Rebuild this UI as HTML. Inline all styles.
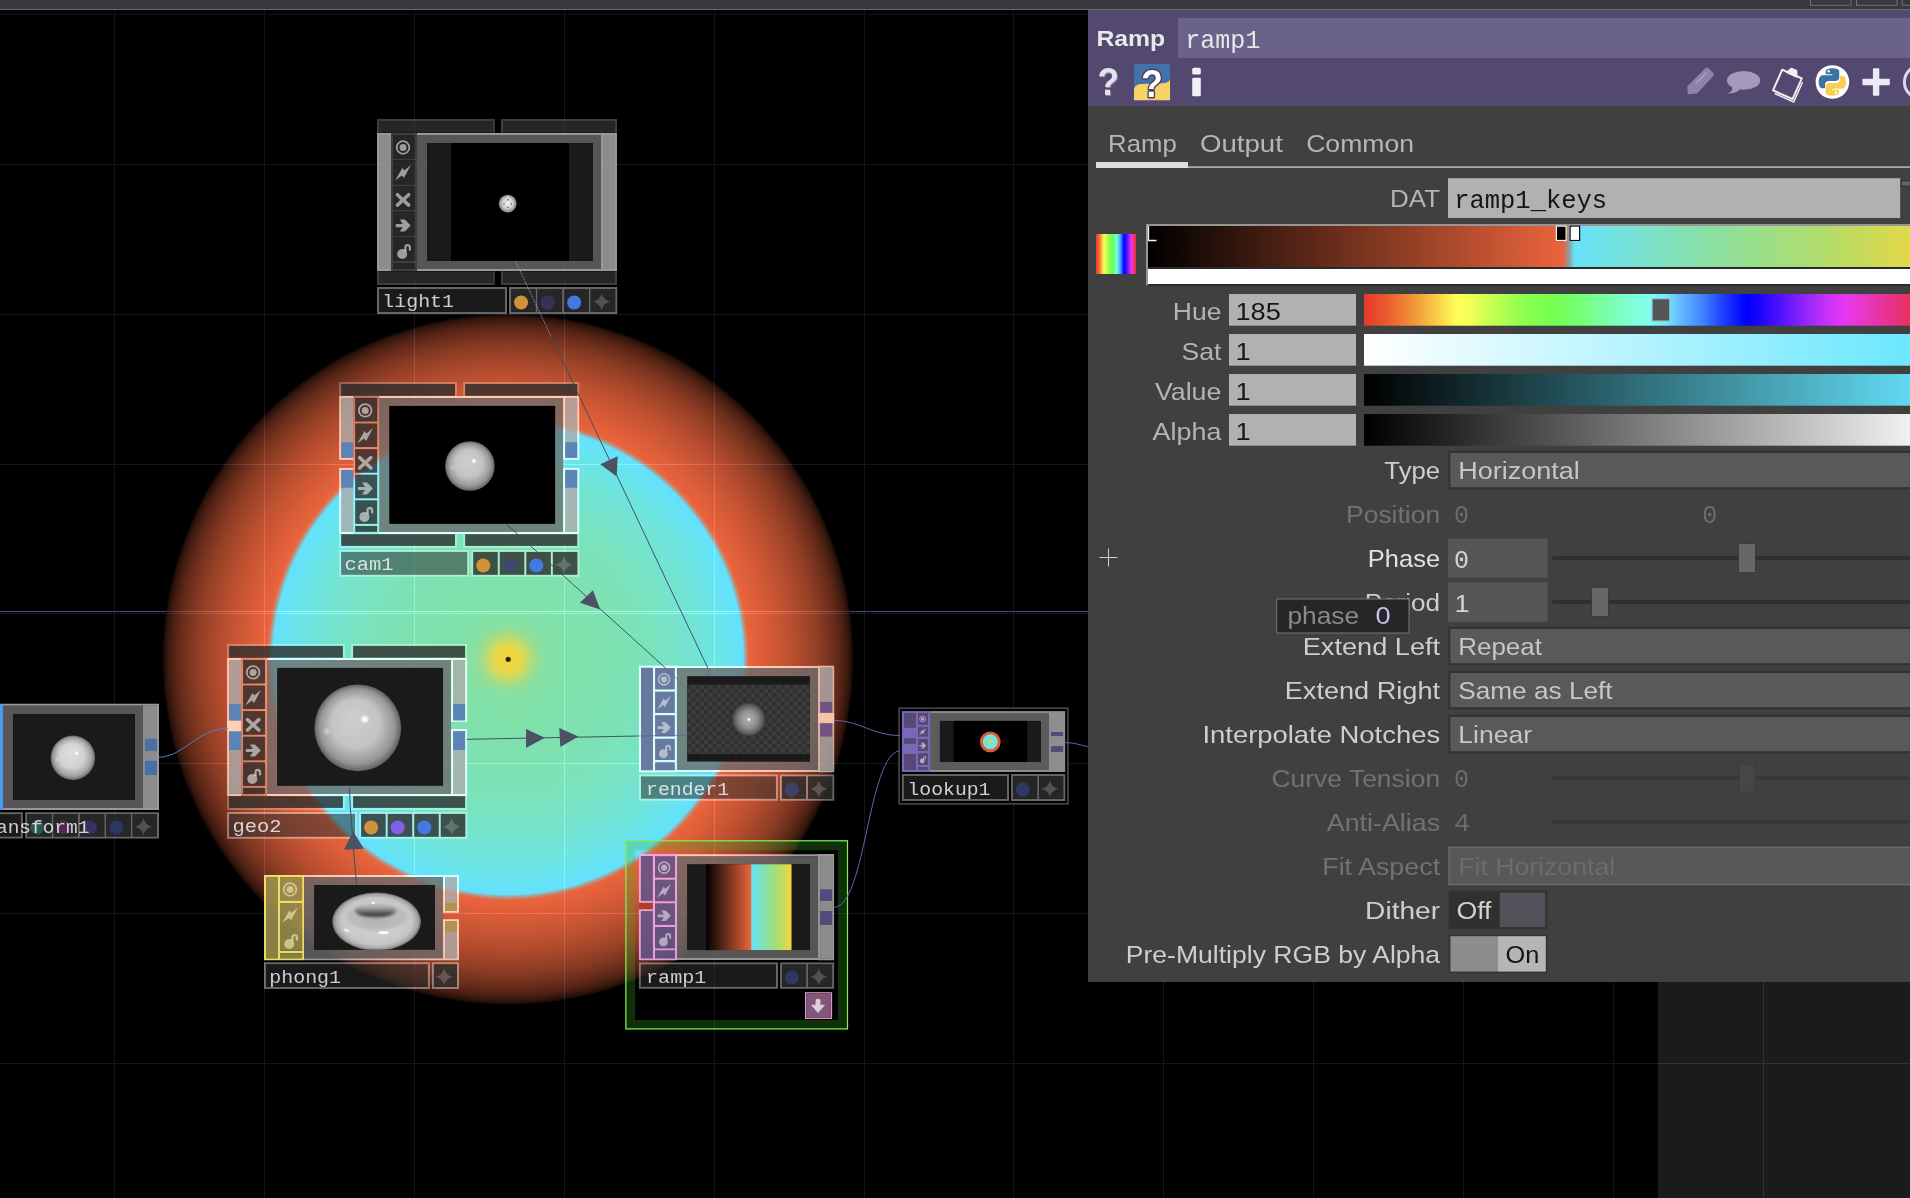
<!DOCTYPE html>
<html><head><meta charset="utf-8"><title>TouchDesigner</title>
<style>
html,body{margin:0;padding:0;background:#000;overflow:hidden}
body{width:1910px;height:1198px;font-family:"Liberation Sans",sans-serif}
svg{display:block;position:absolute;left:0;top:0}
text{white-space:pre}
.add{mix-blend-mode:plus-lighter}
</style></head><body>
<svg width="1910" height="1198" viewBox="0 0 1910 1198">
<defs>
<radialGradient id="bigs" gradientUnits="userSpaceOnUse" cx="508" cy="659.3" r="345.5"><stop offset="0.0000" stop-color="rgb(240,214,62)" stop-opacity="1"/><stop offset="0.0260" stop-color="rgb(240,214,62)" stop-opacity="1"/><stop offset="0.0434" stop-color="rgb(222,216,84)" stop-opacity="1"/><stop offset="0.0637" stop-color="rgb(184,220,118)" stop-opacity="1"/><stop offset="0.0839" stop-color="rgb(150,222,148)" stop-opacity="1"/><stop offset="0.1100" stop-color="rgb(132,224,164)" stop-opacity="1"/><stop offset="0.1621" stop-color="rgb(128,224,168)" stop-opacity="1"/><stop offset="0.2894" stop-color="rgb(126,225,176)" stop-opacity="1"/><stop offset="0.4052" stop-color="rgb(123,226,186)" stop-opacity="1"/><stop offset="0.4776" stop-color="rgb(119,227,199)" stop-opacity="1"/><stop offset="0.5355" stop-color="rgb(115,228,211)" stop-opacity="1"/><stop offset="0.5933" stop-color="rgb(110,229,225)" stop-opacity="1"/><stop offset="0.6397" stop-color="rgb(104,228,241)" stop-opacity="1"/><stop offset="0.6715" stop-color="rgb(100,226,252)" stop-opacity="1"/><stop offset="0.6802" stop-color="rgb(100,226,252)" stop-opacity="1"/><stop offset="0.6874" stop-color="rgb(170,160,150)" stop-opacity="1"/><stop offset="0.6975" stop-color="rgb(234,100,60)" stop-opacity="1"/><stop offset="0.7149" stop-color="rgb(228,97,58)" stop-opacity="1"/><stop offset="0.7323" stop-color="rgb(222,95,57)" stop-opacity="1"/><stop offset="0.7496" stop-color="rgb(216,92,55)" stop-opacity="1"/><stop offset="0.7670" stop-color="rgb(209,89,53)" stop-opacity="1"/><stop offset="0.7844" stop-color="rgb(202,86,52)" stop-opacity="1"/><stop offset="0.8017" stop-color="rgb(195,83,50)" stop-opacity="1"/><stop offset="0.8191" stop-color="rgb(187,80,48)" stop-opacity="1"/><stop offset="0.8365" stop-color="rgb(179,76,45)" stop-opacity="1"/><stop offset="0.8538" stop-color="rgb(170,72,43)" stop-opacity="1"/><stop offset="0.8712" stop-color="rgb(160,68,41)" stop-opacity="1"/><stop offset="0.8886" stop-color="rgb(150,64,38)" stop-opacity="1"/><stop offset="0.9059" stop-color="rgb(138,59,35)" stop-opacity="1"/><stop offset="0.9233" stop-color="rgb(125,53,32)" stop-opacity="1"/><stop offset="0.9407" stop-color="rgb(110,47,28)" stop-opacity="1"/><stop offset="0.9479" stop-color="rgb(104,44,26)" stop-opacity="1"/><stop offset="0.9551" stop-color="rgb(96,41,24)" stop-opacity="1"/><stop offset="0.9624" stop-color="rgb(88,37,22)" stop-opacity="1"/><stop offset="0.9696" stop-color="rgb(80,34,20)" stop-opacity="1"/><stop offset="0.9768" stop-color="rgb(69,29,17)" stop-opacity="1"/><stop offset="0.9841" stop-color="rgb(58,24,14)" stop-opacity="1"/><stop offset="0.9913" stop-color="rgb(42,18,11)" stop-opacity="1"/><stop offset="0.9986" stop-color="rgb(17,7,4)" stop-opacity="1"/><stop offset="0.9977" stop-color="rgb(10,4,2)" stop-opacity="1"/><stop offset="1.0000" stop-color="rgb(0,0,0)" stop-opacity="0"/></radialGradient>
<radialGradient id="lsp" cx="0.5" cy="0.5" r="0.5" fx="0.5" fy="0.45"><stop offset="0" stop-color="#e8e8e8"/><stop offset="0.6" stop-color="#cfcfcf"/><stop offset="1" stop-color="#7a7a7a"/></radialGradient>
<radialGradient id="sp1" cx="0.5" cy="0.5" r="0.5" fx="0.44" fy="0.38"><stop offset="0" stop-color="rgb(206,206,206)"/><stop offset="0.55" stop-color="rgb(196,196,196)"/><stop offset="0.86" stop-color="rgb(150,150,150)"/><stop offset="1" stop-color="rgb(96,96,96)"/></radialGradient>
<radialGradient id="sh1"><stop offset="0" stop-color="#fff" stop-opacity="1"/><stop offset="0.45" stop-color="#fff" stop-opacity="0.75"/><stop offset="1" stop-color="#fff" stop-opacity="0"/></radialGradient>
<radialGradient id="sp2" cx="0.5" cy="0.5" r="0.5" fx="0.44" fy="0.38"><stop offset="0" stop-color="rgb(206,206,206)"/><stop offset="0.55" stop-color="rgb(196,196,196)"/><stop offset="0.86" stop-color="rgb(150,150,150)"/><stop offset="1" stop-color="rgb(96,96,96)"/></radialGradient>
<radialGradient id="sh2"><stop offset="0" stop-color="#fff" stop-opacity="1"/><stop offset="0.45" stop-color="#fff" stop-opacity="0.75"/><stop offset="1" stop-color="#fff" stop-opacity="0"/></radialGradient>
<radialGradient id="sp3" cx="0.5" cy="0.5" r="0.5" fx="0.44" fy="0.38"><stop offset="0" stop-color="rgb(222,222,222)"/><stop offset="0.55" stop-color="rgb(211,211,211)"/><stop offset="0.86" stop-color="rgb(162,162,162)"/><stop offset="1" stop-color="rgb(103,103,103)"/></radialGradient>
<radialGradient id="sh3"><stop offset="0" stop-color="#fff" stop-opacity="1"/><stop offset="0.45" stop-color="#fff" stop-opacity="0.75"/><stop offset="1" stop-color="#fff" stop-opacity="0"/></radialGradient>
<clipPath id="torc"><rect x="314.1" y="885" width="120.9" height="64.8"/></clipPath>
<radialGradient id="tor" cx="0.5" cy="0.5" r="0.5" fx="0.5" fy="0.46"><stop offset="0" stop-color="#c4c4c4"/><stop offset="0.5" stop-color="#cecece"/><stop offset="0.8" stop-color="#c6c6c6"/><stop offset="0.93" stop-color="#a6a6a6"/><stop offset="1" stop-color="#6c6c6c"/></radialGradient>
<linearGradient id="torh" x1="0" x2="0" y1="0" y2="1"><stop offset="0" stop-color="#bcbcbc" stop-opacity="0.2"/><stop offset="0.4" stop-color="#8c8c8c" stop-opacity="0.9"/><stop offset="0.8" stop-color="#383838"/><stop offset="1" stop-color="#5a5a5a"/></linearGradient>
<filter id="tblur" x="-20%" y="-40%" width="140%" height="180%"><feGaussianBlur stdDeviation="1.5"/></filter>
<filter id="tblur2" x="-20%" y="-20%" width="140%" height="140%"><feGaussianBlur stdDeviation="0.7"/></filter>
<pattern id="chk" x="687.1" y="684.6" width="8.5" height="8.5" patternUnits="userSpaceOnUse"><rect width="8.5" height="8.5" fill="#3d3d3d"/><rect width="4.25" height="4.25" fill="#2f2f2f"/><rect x="4.25" y="4.25" width="4.25" height="4.25" fill="#2f2f2f"/></pattern>
<radialGradient id="rsp" cx="0.5" cy="0.5" r="0.5" fx="0.5" fy="0.5"><stop offset="0" stop-color="#b4b4b4"/><stop offset="0.5" stop-color="#8e8e8e"/><stop offset="0.85" stop-color="#585858"/><stop offset="1" stop-color="#2e2e2e"/></radialGradient>
<linearGradient id="ramp2" gradientUnits="userSpaceOnUse" x1="706.1" x2="791.5" y1="0" y2="0"><stop offset="0" stop-color="#000"/><stop offset="0.522" stop-color="rgb(234,100,60)"/><stop offset="0.535" stop-color="rgb(104,226,250)"/><stop offset="0.72" stop-color="rgb(140,224,158)"/><stop offset="0.86" stop-color="rgb(180,220,104)"/><stop offset="1" stop-color="rgb(244,214,60)"/></linearGradient>
<radialGradient id="lk"><stop offset="0" stop-color="#e8d840"/><stop offset="0.12" stop-color="#a0e090"/><stop offset="0.5" stop-color="#78e4c8"/><stop offset="1" stop-color="#68e4f6"/></radialGradient>
<clipPath id="phc"><rect x="1133.8" y="64" width="36.4" height="36.3"/></clipPath>
<linearGradient id="rbw" x1="0" x2="1" y1="0" y2="0"><stop offset="0" stop-color="#e8382c"/><stop offset="0.09" stop-color="#f07a32"/><stop offset="0.2" stop-color="#ffff55"/><stop offset="0.31" stop-color="#9cff50"/><stop offset="0.42" stop-color="#66ff58"/><stop offset="0.52" stop-color="#70ffd8"/><stop offset="0.6" stop-color="#50b0ff"/><stop offset="0.7" stop-color="#0000ff"/><stop offset="0.78" stop-color="#5a10ff"/><stop offset="0.88" stop-color="#e838f0"/><stop offset="1" stop-color="#f03030"/></linearGradient>
<linearGradient id="ramp" gradientUnits="userSpaceOnUse" x1="1148" x2="1940" y1="0" y2="0"><stop offset="0" stop-color="#000"/><stop offset="0.5237" stop-color="rgb(234,100,60)"/><stop offset="0.5313" stop-color="rgb(150,150,150)"/><stop offset="0.5383" stop-color="rgb(104,226,250)"/><stop offset="0.72" stop-color="rgb(140,224,158)"/><stop offset="0.86" stop-color="rgb(180,220,104)"/><stop offset="1" stop-color="rgb(244,214,60)"/></linearGradient>
<linearGradient id="hue" gradientUnits="userSpaceOnUse" x1="1364" x2="1942" y1="0" y2="0"><stop offset="0.0000" stop-color="#e8382c"/><stop offset="0.0389" stop-color="#ea5a2e"/><stop offset="0.0833" stop-color="#f09236"/><stop offset="0.1250" stop-color="#f8cc48"/><stop offset="0.1611" stop-color="#ffff58"/><stop offset="0.1833" stop-color="#f2ff56"/><stop offset="0.2222" stop-color="#c4ff52"/><stop offset="0.2778" stop-color="#8cff4e"/><stop offset="0.3278" stop-color="#74ff50"/><stop offset="0.3750" stop-color="#76ff76"/><stop offset="0.4167" stop-color="#7affa6"/><stop offset="0.4583" stop-color="#7effd0"/><stop offset="0.4944" stop-color="#80fff0"/><stop offset="0.5222" stop-color="#76e6ff"/><stop offset="0.5500" stop-color="#60b8ff"/><stop offset="0.5833" stop-color="#4488ff"/><stop offset="0.6222" stop-color="#1c3cff"/><stop offset="0.6611" stop-color="#0000ff"/><stop offset="0.6833" stop-color="#1804fe"/><stop offset="0.7222" stop-color="#5412fc"/><stop offset="0.7639" stop-color="#9226fa"/><stop offset="0.8056" stop-color="#cc34f6"/><stop offset="0.8333" stop-color="#e838f0"/><stop offset="0.8667" stop-color="#e836c4"/><stop offset="0.9056" stop-color="#e83290"/><stop offset="0.9444" stop-color="#e83060"/><stop offset="1.0000" stop-color="#e83030"/></linearGradient>
<linearGradient id="sat" gradientUnits="userSpaceOnUse" x1="1364" x2="1942" y1="0" y2="0"><stop offset="0" stop-color="#fff"/><stop offset="1" stop-color="#62e6ff"/></linearGradient>
<linearGradient id="val" gradientUnits="userSpaceOnUse" x1="1364" x2="1942" y1="0" y2="0"><stop offset="0" stop-color="#000"/><stop offset="1" stop-color="#66e6ff"/></linearGradient>
<linearGradient id="alp" gradientUnits="userSpaceOnUse" x1="1364" x2="1942" y1="0" y2="0"><stop offset="0" stop-color="#000"/><stop offset="1" stop-color="#fff"/></linearGradient>
</defs>
<rect x="0" y="0" width="1910" height="1198" fill="#000" />
<rect x="1658" y="982" width="252" height="216" fill="#1b1b1b" />
<circle cx="508" cy="659.3" r="345.5" fill="url(#bigs)"/>
<circle cx="508.2" cy="659.3" r="2.6" fill="#3a3010"/>
<circle cx="508.2" cy="659.3" r="1.4" fill="#1c1608"/>
<g class="add">
<rect x="114" y="10" width="1" height="1188" fill="rgb(21,21,33)" />
<rect x="264" y="10" width="1" height="1188" fill="rgb(21,21,33)" />
<rect x="414" y="10" width="1" height="1188" fill="rgb(21,21,33)" />
<rect x="564" y="10" width="1" height="1188" fill="rgb(21,21,33)" />
<rect x="714" y="10" width="1" height="1188" fill="rgb(21,21,33)" />
<rect x="864" y="10" width="1" height="1188" fill="rgb(21,21,33)" />
<rect x="1013" y="10" width="1" height="1188" fill="rgb(21,21,33)" />
<rect x="1163" y="982" width="1" height="216" fill="rgb(21,21,33)" />
<rect x="1313" y="982" width="1" height="216" fill="rgb(21,21,33)" />
<rect x="1463" y="982" width="1" height="216" fill="rgb(21,21,33)" />
<rect x="1613" y="982" width="1" height="216" fill="rgb(21,21,33)" />
<rect x="1763" y="982" width="1" height="216" fill="rgb(21,21,33)" />
<rect x="0" y="1063" width="1910" height="1" fill="rgb(21,21,33)" />
<rect x="0" y="913" width="1088" height="1" fill="rgb(21,21,33)" />
<rect x="0" y="763" width="1088" height="1" fill="rgb(21,21,33)" />
<rect x="0" y="613" width="1088" height="1" fill="rgb(21,21,33)" />
<rect x="0" y="464" width="1088" height="1" fill="rgb(21,21,33)" />
<rect x="0" y="314" width="1088" height="1" fill="rgb(21,21,33)" />
<rect x="0" y="164" width="1088" height="1" fill="rgb(21,21,33)" />
<rect x="0" y="14" width="1088" height="1" fill="rgb(21,21,33)" />
<rect x="0" y="611" width="166" height="1" fill="rgb(74,72,122)" />
<rect x="166" y="611" width="684" height="1" fill="rgb(34,30,46)" />
<rect x="850" y="611" width="238" height="1" fill="rgb(74,72,122)" />
</g>
<rect x="0" y="0" width="1910" height="9" fill="#38393c" />
<rect x="0" y="9" width="1910" height="1" fill="#6a6a6c" />
<rect x="1810.5" y="-1.5" width="40.5" height="6.8" fill="none" stroke="#707072" stroke-width="1" />
<rect x="1856.5" y="-1.5" width="40.6" height="6.8" fill="none" stroke="#707072" stroke-width="1" />
<rect x="1902.2" y="-1.5" width="17.3" height="6.8" fill="none" stroke="#707072" stroke-width="1" />
<path d="M377 119 H494.8 V132.8 H377 Z M379 121 V132.8 H492.8 V121 Z" fill="rgba(0,0,0,0.2)" fill-rule="evenodd"/>
<path d="M377 119 H494.8 V132.8 H377 Z M379 121 V132.8 H492.8 V121 Z" fill="rgb(62,62,62)" fill-rule="evenodd" class="add"/>
<rect x="379" y="121" width="113.8" height="11.8" fill="rgba(47,47,47,0.81)" />
<path d="M501 119 H617 V132.8 H501 Z M503 121 V132.8 H615 V121 Z" fill="rgba(0,0,0,0.2)" fill-rule="evenodd"/>
<path d="M501 119 H617 V132.8 H501 Z M503 121 V132.8 H615 V121 Z" fill="rgb(62,62,62)" fill-rule="evenodd" class="add"/>
<rect x="503" y="121" width="112" height="11.8" fill="rgba(47,47,47,0.81)" />
<path d="M377 271.3 H494.8 V285 H377 Z M379 271.3 V283 H492.8 V271.3 Z" fill="rgba(0,0,0,0.2)" fill-rule="evenodd"/>
<path d="M377 271.3 H494.8 V285 H377 Z M379 271.3 V283 H492.8 V271.3 Z" fill="rgb(62,62,62)" fill-rule="evenodd" class="add"/>
<rect x="379" y="271.3" width="113.8" height="11.7" fill="rgba(47,47,47,0.81)" />
<path d="M501 271.3 H617 V285 H501 Z M503 271.3 V283 H615 V271.3 Z" fill="rgba(0,0,0,0.2)" fill-rule="evenodd"/>
<path d="M501 271.3 H617 V285 H501 Z M503 271.3 V283 H615 V271.3 Z" fill="rgb(62,62,62)" fill-rule="evenodd" class="add"/>
<rect x="503" y="271.3" width="112" height="11.7" fill="rgba(47,47,47,0.81)" />
<path d="M391 133 H417 V271 H391 Z M393 135 V158.6 H415 V135 Z M393 160.6 V184.2 H415 V160.6 Z M393 186.2 V209.8 H415 V186.2 Z M393 211.8 V235.4 H415 V211.8 Z M393 237.4 V261 H415 V237.4 Z M393 263 V269 H415 V263 Z" fill="rgba(0,0,0,0.2)" fill-rule="evenodd"/>
<path d="M391 133 H417 V271 H391 Z M393 135 V158.6 H415 V135 Z M393 160.6 V184.2 H415 V160.6 Z M393 186.2 V209.8 H415 V186.2 Z M393 211.8 V235.4 H415 V211.8 Z M393 237.4 V261 H415 V237.4 Z M393 263 V269 H415 V263 Z" fill="rgb(62,62,62)" fill-rule="evenodd" class="add"/>
<rect x="393" y="135" width="22" height="23.6" fill="rgba(47,47,47,0.81)" />
<g transform="translate(393 135) scale(1)" fill="rgba(255,255,255,0.55)" stroke="none"><circle cx="10" cy="12.5" r="6.3" fill="none" stroke="rgba(255,255,255,0.55)" stroke-width="1.8"/><circle cx="10" cy="12.5" r="3.5"/></g>
<rect x="393" y="160.6" width="22" height="23.6" fill="rgba(47,47,47,0.81)" />
<g transform="translate(393 160.6) scale(1)" fill="rgba(255,255,255,0.55)" stroke="none"><path d="M17.9 4.4 L11.3 9.9 L9.4 7.4 L2.1 20 L8.9 15 L10.9 17.5 Z"/></g>
<rect x="393" y="186.2" width="22" height="23.6" fill="rgba(47,47,47,0.81)" />
<g transform="translate(393 186.2) scale(1)" fill="rgba(255,255,255,0.55)" stroke="none"><path d="M4.4 8.5 L15.7 18.9 M15.7 8.5 L4.4 18.9" fill="none" stroke="rgba(255,255,255,0.55)" stroke-width="3.5" stroke-linecap="round"/></g>
<rect x="393" y="211.8" width="22" height="23.6" fill="rgba(47,47,47,0.81)" />
<g transform="translate(393 211.8) scale(1)" fill="rgba(255,255,255,0.55)" stroke="none"><path d="M2.9 12.2 H9.7 L6.8 7.8 H11.8 L17.7 13.8 L11.8 19.8 H6.8 L9.7 15.4 H2.9 Q2.2 13.8 2.9 12.2 Z"/></g>
<rect x="393" y="237.4" width="22" height="23.6" fill="rgba(47,47,47,0.81)" />
<g transform="translate(393 237.4) scale(1)" fill="rgba(255,255,255,0.55)" stroke="none"><circle cx="9.2" cy="16.6" r="5"/><path d="M12.4 13.8 V10.2 A2.25 2.6 0 0 1 16.9 10.2 V13" fill="none" stroke="rgba(255,255,255,0.55)" stroke-width="2.2"/></g>
<rect x="393" y="263" width="22" height="6" fill="rgba(47,47,47,0.81)" />
<path d="M377 287 H507 V313.9 H377 Z M379 289 V311.9 H505 V289 Z" fill="rgba(255,255,255,0.4)" fill-rule="evenodd"/>
<rect x="379" y="289" width="126" height="22.9" fill="rgba(48,48,48,0.54)" />
<text x="382.3" y="307.3" font-family="Liberation Mono" font-size="18.8" fill="rgba(255,255,255,0.78)" text-anchor="start" font-weight="normal" textLength="71.68" lengthAdjust="spacingAndGlyphs" >light1</text>
<path d="M509 287 H617.2 V313.9 H509 Z M511 289 V311.9 H535.55 V289 Z M537.55 289 V311.9 H562.1 V289 Z M564.1 289 V311.9 H588.65 V289 Z M590.65 289 V311.9 H615.2 V289 Z" fill="rgba(255,255,255,0.4)" fill-rule="evenodd"/>
<rect x="511" y="289" width="24.55" height="22.9" fill="rgba(47,47,47,0.81)" />
<circle cx="521.07" cy="302.55" r="7" fill="#d0923a"/>
<rect x="537.55" y="289" width="24.55" height="22.9" fill="rgba(47,47,47,0.81)" />
<circle cx="547.62" cy="302.55" r="7" fill="#3a3058"/>
<rect x="564.1" y="289" width="24.55" height="22.9" fill="rgba(47,47,47,0.81)" />
<circle cx="574.17" cy="302.55" r="7" fill="#4478e4"/>
<rect x="590.65" y="289" width="24.55" height="22.9" fill="rgba(47,47,47,0.81)" />
<path d="M601.63 293.35 Q603.31 300.07 610.03 301.75 Q603.31 303.43 601.63 310.15 Q599.95 303.43 593.23 301.75 Q599.95 300.07 601.63 293.35 Z" fill="rgba(255,255,255,0.2)"/>
<path d="M377 133 H391 V271 H377 Z M379 135 V269 H391 V135 Z" fill="rgba(0,0,0,0.42)" fill-rule="evenodd"/>
<path d="M377 133 H391 V271 H377 Z M379 135 V269 H391 V135 Z" fill="rgb(152,152,152)" fill-rule="evenodd" class="add"/>
<rect x="379" y="135" width="12" height="134" fill="rgba(173,173,173,0.81)" />
<path d="M417 133 H601 V135 H417 Z M417 269 H601 V271 H417 Z" fill="rgba(0,0,0,0.42)" fill-rule="evenodd"/>
<path d="M417 133 H601 V135 H417 Z M417 269 H601 V271 H417 Z" fill="rgb(152,152,152)" fill-rule="evenodd" class="add"/>
<path d="M417 135 H601 V269 H417 Z M427 143 V261 H593 V143 Z" fill="rgba(107,107,107,0.8)" fill-rule="evenodd"/>
<rect x="427" y="143" width="166" height="118" fill="#1a1a1a" />
<rect x="451" y="143" width="118" height="118" fill="#000" />
<path d="M601 133 H617 V271 H601 Z M603 135 V269 H615 V135 Z" fill="rgba(0,0,0,0.42)" fill-rule="evenodd"/>
<path d="M601 133 H617 V271 H601 Z M603 135 V269 H615 V135 Z" fill="rgb(152,152,152)" fill-rule="evenodd" class="add"/>
<rect x="603" y="135" width="12" height="134" fill="rgba(173,173,173,0.81)" />
<circle cx="507.7" cy="203.6" r="8.9" fill="url(#lsp)"/>
<rect x="506.3" y="202.4" width="2.8" height="2.8" fill="#f4f4f4"/>
<path d="M507.7 198.6 V200.4 M507.7 206.8 V208 M503.4 203.8 H504.6 M510.8 203.8 H512" stroke="#555" stroke-width="1.2"/>
<rect x="507" y="196.6" width="1.4" height="2" fill="#f4f4f4"/>
<path d="M339.2 381.9 H457 V395.7 H339.2 Z M341.2 383.9 V395.7 H455 V383.9 Z" fill="rgba(0,0,0,0.2)" fill-rule="evenodd"/>
<path d="M339.2 381.9 H457 V395.7 H339.2 Z M341.2 383.9 V395.7 H455 V383.9 Z" fill="rgb(62,62,62)" fill-rule="evenodd" class="add"/>
<rect x="341.2" y="383.9" width="113.8" height="11.8" fill="rgba(47,47,47,0.81)" />
<path d="M463.2 381.9 H579.2 V395.7 H463.2 Z M465.2 383.9 V395.7 H577.2 V383.9 Z" fill="rgba(0,0,0,0.2)" fill-rule="evenodd"/>
<path d="M463.2 381.9 H579.2 V395.7 H463.2 Z M465.2 383.9 V395.7 H577.2 V383.9 Z" fill="rgb(62,62,62)" fill-rule="evenodd" class="add"/>
<rect x="465.2" y="383.9" width="112" height="11.8" fill="rgba(47,47,47,0.81)" />
<path d="M339.2 534.2 H457 V547.9 H339.2 Z M341.2 534.2 V545.9 H455 V534.2 Z" fill="rgba(0,0,0,0.2)" fill-rule="evenodd"/>
<path d="M339.2 534.2 H457 V547.9 H339.2 Z M341.2 534.2 V545.9 H455 V534.2 Z" fill="rgb(62,62,62)" fill-rule="evenodd" class="add"/>
<rect x="341.2" y="534.2" width="113.8" height="11.7" fill="rgba(47,47,47,0.81)" />
<path d="M463.2 534.2 H579.2 V547.9 H463.2 Z M465.2 534.2 V545.9 H577.2 V534.2 Z" fill="rgba(0,0,0,0.2)" fill-rule="evenodd"/>
<path d="M463.2 534.2 H579.2 V547.9 H463.2 Z M465.2 534.2 V545.9 H577.2 V534.2 Z" fill="rgb(62,62,62)" fill-rule="evenodd" class="add"/>
<rect x="465.2" y="534.2" width="112" height="11.7" fill="rgba(47,47,47,0.81)" />
<path d="M353.2 395.9 H379.2 V533.9 H353.2 Z M355.2 397.9 V421.5 H377.2 V397.9 Z M355.2 423.5 V447.1 H377.2 V423.5 Z M355.2 449.1 V472.7 H377.2 V449.1 Z M355.2 474.7 V498.3 H377.2 V474.7 Z M355.2 500.3 V523.9 H377.2 V500.3 Z M355.2 525.9 V531.9 H377.2 V525.9 Z" fill="rgba(0,0,0,0.2)" fill-rule="evenodd"/>
<path d="M353.2 395.9 H379.2 V533.9 H353.2 Z M355.2 397.9 V421.5 H377.2 V397.9 Z M355.2 423.5 V447.1 H377.2 V423.5 Z M355.2 449.1 V472.7 H377.2 V449.1 Z M355.2 474.7 V498.3 H377.2 V474.7 Z M355.2 500.3 V523.9 H377.2 V500.3 Z M355.2 525.9 V531.9 H377.2 V525.9 Z" fill="rgb(62,62,62)" fill-rule="evenodd" class="add"/>
<rect x="355.2" y="397.9" width="22" height="23.6" fill="rgba(47,47,47,0.81)" />
<g transform="translate(355.2 397.9) scale(1)" fill="rgba(255,255,255,0.55)" stroke="none"><circle cx="10" cy="12.5" r="6.3" fill="none" stroke="rgba(255,255,255,0.55)" stroke-width="1.8"/><circle cx="10" cy="12.5" r="3.5"/></g>
<rect x="355.2" y="423.5" width="22" height="23.6" fill="rgba(47,47,47,0.81)" />
<g transform="translate(355.2 423.5) scale(1)" fill="rgba(255,255,255,0.55)" stroke="none"><path d="M17.9 4.4 L11.3 9.9 L9.4 7.4 L2.1 20 L8.9 15 L10.9 17.5 Z"/></g>
<rect x="355.2" y="449.1" width="22" height="23.6" fill="rgba(47,47,47,0.81)" />
<g transform="translate(355.2 449.1) scale(1)" fill="rgba(255,255,255,0.55)" stroke="none"><path d="M4.4 8.5 L15.7 18.9 M15.7 8.5 L4.4 18.9" fill="none" stroke="rgba(255,255,255,0.55)" stroke-width="3.5" stroke-linecap="round"/></g>
<rect x="355.2" y="474.7" width="22" height="23.6" fill="rgba(47,47,47,0.81)" />
<g transform="translate(355.2 474.7) scale(1)" fill="rgba(255,255,255,0.55)" stroke="none"><path d="M2.9 12.2 H9.7 L6.8 7.8 H11.8 L17.7 13.8 L11.8 19.8 H6.8 L9.7 15.4 H2.9 Q2.2 13.8 2.9 12.2 Z"/></g>
<rect x="355.2" y="500.3" width="22" height="23.6" fill="rgba(47,47,47,0.81)" />
<g transform="translate(355.2 500.3) scale(1)" fill="rgba(255,255,255,0.55)" stroke="none"><circle cx="9.2" cy="16.6" r="5"/><path d="M12.4 13.8 V10.2 A2.25 2.6 0 0 1 16.9 10.2 V13" fill="none" stroke="rgba(255,255,255,0.55)" stroke-width="2.2"/></g>
<rect x="355.2" y="525.9" width="22" height="6" fill="rgba(47,47,47,0.81)" />
<path d="M339.2 549.9 H469.2 V576.8 H339.2 Z M341.2 551.9 V574.8 H467.2 V551.9 Z" fill="rgba(255,255,255,0.4)" fill-rule="evenodd"/>
<rect x="341.2" y="551.9" width="126" height="22.9" fill="rgba(48,48,48,0.54)" />
<text x="344.5" y="570.2" font-family="Liberation Mono" font-size="18.8" fill="rgba(255,255,255,0.78)" text-anchor="start" font-weight="normal" textLength="49.12" lengthAdjust="spacingAndGlyphs" >cam1</text>
<path d="M471.2 549.9 H579.4 V576.8 H471.2 Z M473.2 551.9 V574.8 H497.75 V551.9 Z M499.75 551.9 V574.8 H524.3 V551.9 Z M526.3 551.9 V574.8 H550.85 V551.9 Z M552.85 551.9 V574.8 H577.4 V551.9 Z" fill="rgba(255,255,255,0.4)" fill-rule="evenodd"/>
<rect x="473.2" y="551.9" width="24.55" height="22.9" fill="rgba(47,47,47,0.81)" />
<circle cx="483.28" cy="565.45" r="7" fill="#d0923a"/>
<rect x="499.75" y="551.9" width="24.55" height="22.9" fill="rgba(47,47,47,0.81)" />
<circle cx="509.82" cy="565.45" r="7" fill="rgba(64,72,120,0.85)"/>
<rect x="526.3" y="551.9" width="24.55" height="22.9" fill="rgba(47,47,47,0.81)" />
<circle cx="536.38" cy="565.45" r="7" fill="#4478e4"/>
<rect x="552.85" y="551.9" width="24.55" height="22.9" fill="rgba(47,47,47,0.81)" />
<path d="M563.83 556.25 Q565.5 562.97 572.23 564.65 Q565.5 566.33 563.83 573.05 Q562.15 566.33 555.43 564.65 Q562.15 562.97 563.83 556.25 Z" fill="rgba(255,255,255,0.2)"/>
<path d="M339.2 395.9 H353.2 V459.8 H339.2 Z M341.2 397.9 V457.8 H353.2 V397.9 Z" fill="rgba(0,0,0,0.42)" fill-rule="evenodd"/>
<path d="M339.2 395.9 H353.2 V459.8 H339.2 Z M341.2 397.9 V457.8 H353.2 V397.9 Z" fill="rgb(152,152,152)" fill-rule="evenodd" class="add"/>
<rect x="341.2" y="397.9" width="12" height="59.9" fill="rgba(173,173,173,0.81)" />
<path d="M339.2 467.9 H353.2 V533.9 H339.2 Z M341.2 469.9 V531.9 H353.2 V469.9 Z" fill="rgba(0,0,0,0.42)" fill-rule="evenodd"/>
<path d="M339.2 467.9 H353.2 V533.9 H339.2 Z M341.2 469.9 V531.9 H353.2 V469.9 Z" fill="rgb(152,152,152)" fill-rule="evenodd" class="add"/>
<rect x="341.2" y="469.9" width="12" height="62" fill="rgba(173,173,173,0.81)" />
<rect x="341.2" y="442.2" width="12" height="15.7" fill="rgba(86,128,182,0.92)" />
<rect x="341.2" y="469.9" width="12" height="17.8" fill="rgba(86,128,182,0.92)" />
<path d="M379.2 395.9 H563.2 V397.9 H379.2 Z M379.2 531.9 H563.2 V533.9 H379.2 Z" fill="rgba(0,0,0,0.42)" fill-rule="evenodd"/>
<path d="M379.2 395.9 H563.2 V397.9 H379.2 Z M379.2 531.9 H563.2 V533.9 H379.2 Z" fill="rgb(152,152,152)" fill-rule="evenodd" class="add"/>
<path d="M379.2 397.9 H563.2 V531.9 H379.2 Z M389.2 405.9 V523.9 H555.2 V405.9 Z" fill="rgba(107,107,107,0.8)" fill-rule="evenodd"/>
<rect x="389.2" y="405.9" width="166" height="118" fill="#000" />
<circle cx="469.9" cy="466" r="24.8" fill="url(#sp1)"/>
<circle cx="473.87" cy="461.04" r="2.85" fill="url(#sh1)"/>
<circle cx="452.04" cy="467.98" r="2.48" fill="url(#sh1)" opacity="0.35"/>
<path d="M563.2 395.9 H579.2 V459.8 H563.2 Z M565.2 397.9 V457.8 H577.2 V397.9 Z" fill="rgba(0,0,0,0.42)" fill-rule="evenodd"/>
<path d="M563.2 395.9 H579.2 V459.8 H563.2 Z M565.2 397.9 V457.8 H577.2 V397.9 Z" fill="rgb(152,152,152)" fill-rule="evenodd" class="add"/>
<rect x="565.2" y="397.9" width="12" height="59.9" fill="rgba(173,173,173,0.81)" />
<path d="M563.2 467.9 H579.2 V533.9 H563.2 Z M565.2 469.9 V531.9 H577.2 V469.9 Z" fill="rgba(0,0,0,0.42)" fill-rule="evenodd"/>
<path d="M563.2 467.9 H579.2 V533.9 H563.2 Z M565.2 469.9 V531.9 H577.2 V469.9 Z" fill="rgb(152,152,152)" fill-rule="evenodd" class="add"/>
<rect x="565.2" y="469.9" width="12" height="62" fill="rgba(173,173,173,0.81)" />
<rect x="565.2" y="442.2" width="12" height="15.7" fill="rgba(86,128,182,0.92)" />
<rect x="565.2" y="469.9" width="12" height="17.8" fill="rgba(86,128,182,0.92)" />
<path d="M227.1 643.9 H344.9 V657.7 H227.1 Z M229.1 645.9 V657.7 H342.9 V645.9 Z" fill="rgba(0,0,0,0.2)" fill-rule="evenodd"/>
<path d="M227.1 643.9 H344.9 V657.7 H227.1 Z M229.1 645.9 V657.7 H342.9 V645.9 Z" fill="rgb(62,62,62)" fill-rule="evenodd" class="add"/>
<rect x="229.1" y="645.9" width="113.8" height="11.8" fill="rgba(47,47,47,0.81)" />
<path d="M351.1 643.9 H467.1 V657.7 H351.1 Z M353.1 645.9 V657.7 H465.1 V645.9 Z" fill="rgba(0,0,0,0.2)" fill-rule="evenodd"/>
<path d="M351.1 643.9 H467.1 V657.7 H351.1 Z M353.1 645.9 V657.7 H465.1 V645.9 Z" fill="rgb(62,62,62)" fill-rule="evenodd" class="add"/>
<rect x="353.1" y="645.9" width="112" height="11.8" fill="rgba(47,47,47,0.81)" />
<path d="M227.1 796.2 H344.9 V809.9 H227.1 Z M229.1 796.2 V807.9 H342.9 V796.2 Z" fill="rgba(0,0,0,0.2)" fill-rule="evenodd"/>
<path d="M227.1 796.2 H344.9 V809.9 H227.1 Z M229.1 796.2 V807.9 H342.9 V796.2 Z" fill="rgb(62,62,62)" fill-rule="evenodd" class="add"/>
<rect x="229.1" y="796.2" width="113.8" height="11.7" fill="rgba(47,47,47,0.81)" />
<path d="M351.1 796.2 H467.1 V809.9 H351.1 Z M353.1 796.2 V807.9 H465.1 V796.2 Z" fill="rgba(0,0,0,0.2)" fill-rule="evenodd"/>
<path d="M351.1 796.2 H467.1 V809.9 H351.1 Z M353.1 796.2 V807.9 H465.1 V796.2 Z" fill="rgb(62,62,62)" fill-rule="evenodd" class="add"/>
<rect x="353.1" y="796.2" width="112" height="11.7" fill="rgba(47,47,47,0.81)" />
<path d="M241.1 657.9 H267.1 V795.9 H241.1 Z M243.1 659.9 V683.5 H265.1 V659.9 Z M243.1 685.5 V709.1 H265.1 V685.5 Z M243.1 711.1 V734.7 H265.1 V711.1 Z M243.1 736.7 V760.3 H265.1 V736.7 Z M243.1 762.3 V785.9 H265.1 V762.3 Z M243.1 787.9 V793.9 H265.1 V787.9 Z" fill="rgba(0,0,0,0.2)" fill-rule="evenodd"/>
<path d="M241.1 657.9 H267.1 V795.9 H241.1 Z M243.1 659.9 V683.5 H265.1 V659.9 Z M243.1 685.5 V709.1 H265.1 V685.5 Z M243.1 711.1 V734.7 H265.1 V711.1 Z M243.1 736.7 V760.3 H265.1 V736.7 Z M243.1 762.3 V785.9 H265.1 V762.3 Z M243.1 787.9 V793.9 H265.1 V787.9 Z" fill="rgb(62,62,62)" fill-rule="evenodd" class="add"/>
<rect x="243.1" y="659.9" width="22" height="23.6" fill="rgba(47,47,47,0.81)" />
<g transform="translate(243.1 659.9) scale(1)" fill="rgba(255,255,255,0.55)" stroke="none"><circle cx="10" cy="12.5" r="6.3" fill="none" stroke="rgba(255,255,255,0.55)" stroke-width="1.8"/><circle cx="10" cy="12.5" r="3.5"/></g>
<rect x="243.1" y="685.5" width="22" height="23.6" fill="rgba(47,47,47,0.81)" />
<g transform="translate(243.1 685.5) scale(1)" fill="rgba(255,255,255,0.55)" stroke="none"><path d="M17.9 4.4 L11.3 9.9 L9.4 7.4 L2.1 20 L8.9 15 L10.9 17.5 Z"/></g>
<rect x="243.1" y="711.1" width="22" height="23.6" fill="rgba(47,47,47,0.81)" />
<g transform="translate(243.1 711.1) scale(1)" fill="rgba(255,255,255,0.55)" stroke="none"><path d="M4.4 8.5 L15.7 18.9 M15.7 8.5 L4.4 18.9" fill="none" stroke="rgba(255,255,255,0.55)" stroke-width="3.5" stroke-linecap="round"/></g>
<rect x="243.1" y="736.7" width="22" height="23.6" fill="rgba(47,47,47,0.81)" />
<g transform="translate(243.1 736.7) scale(1)" fill="rgba(255,255,255,0.55)" stroke="none"><path d="M2.9 12.2 H9.7 L6.8 7.8 H11.8 L17.7 13.8 L11.8 19.8 H6.8 L9.7 15.4 H2.9 Q2.2 13.8 2.9 12.2 Z"/></g>
<rect x="243.1" y="762.3" width="22" height="23.6" fill="rgba(47,47,47,0.81)" />
<g transform="translate(243.1 762.3) scale(1)" fill="rgba(255,255,255,0.55)" stroke="none"><circle cx="9.2" cy="16.6" r="5"/><path d="M12.4 13.8 V10.2 A2.25 2.6 0 0 1 16.9 10.2 V13" fill="none" stroke="rgba(255,255,255,0.55)" stroke-width="2.2"/></g>
<rect x="243.1" y="787.9" width="22" height="6" fill="rgba(47,47,47,0.81)" />
<path d="M227.1 811.9 H357.1 V838.8 H227.1 Z M229.1 813.9 V836.8 H355.1 V813.9 Z" fill="rgba(255,255,255,0.4)" fill-rule="evenodd"/>
<rect x="229.1" y="813.9" width="126" height="22.9" fill="rgba(48,48,48,0.54)" />
<text x="232.4" y="832.2" font-family="Liberation Mono" font-size="18.8" fill="rgba(255,255,255,0.78)" text-anchor="start" font-weight="normal" textLength="49.12" lengthAdjust="spacingAndGlyphs" >geo2</text>
<path d="M359.1 811.9 H467.3 V838.8 H359.1 Z M361.1 813.9 V836.8 H385.65 V813.9 Z M387.65 813.9 V836.8 H412.2 V813.9 Z M414.2 813.9 V836.8 H438.75 V813.9 Z M440.75 813.9 V836.8 H465.3 V813.9 Z" fill="rgba(255,255,255,0.4)" fill-rule="evenodd"/>
<rect x="361.1" y="813.9" width="24.55" height="22.9" fill="rgba(47,47,47,0.81)" />
<circle cx="371.18" cy="827.45" r="7" fill="#d0923a"/>
<rect x="387.65" y="813.9" width="24.55" height="22.9" fill="rgba(47,47,47,0.81)" />
<circle cx="397.72" cy="827.45" r="7" fill="#8060e8"/>
<rect x="414.2" y="813.9" width="24.55" height="22.9" fill="rgba(47,47,47,0.81)" />
<circle cx="424.28" cy="827.45" r="7" fill="#4478e4"/>
<rect x="440.75" y="813.9" width="24.55" height="22.9" fill="rgba(47,47,47,0.81)" />
<path d="M451.72 818.25 Q453.4 824.97 460.12 826.65 Q453.4 828.33 451.72 835.05 Q450.04 828.33 443.32 826.65 Q450.04 824.97 451.72 818.25 Z" fill="rgba(255,255,255,0.2)"/>
<path d="M227.1 657.9 H241.1 V795.9 H227.1 Z M229.1 659.9 V793.9 H241.1 V659.9 Z" fill="rgba(0,0,0,0.42)" fill-rule="evenodd"/>
<path d="M227.1 657.9 H241.1 V795.9 H227.1 Z M229.1 659.9 V793.9 H241.1 V659.9 Z" fill="rgb(152,152,152)" fill-rule="evenodd" class="add"/>
<rect x="229.1" y="659.9" width="12" height="134" fill="rgba(173,173,173,0.81)" />
<rect x="229.1" y="703.9" width="12" height="16.8" fill="rgba(86,128,182,0.92)" />
<rect x="229.1" y="731.2" width="12" height="18.8" fill="rgba(86,128,182,0.92)" />
<rect x="227.1" y="720.7" width="14" height="10.5" fill="rgba(255,212,186,0.95)" />
<path d="M267.1 657.9 H451.1 V659.9 H267.1 Z M267.1 793.9 H451.1 V795.9 H267.1 Z" fill="rgba(0,0,0,0.42)" fill-rule="evenodd"/>
<path d="M267.1 657.9 H451.1 V659.9 H267.1 Z M267.1 793.9 H451.1 V795.9 H267.1 Z" fill="rgb(152,152,152)" fill-rule="evenodd" class="add"/>
<path d="M267.1 659.9 H451.1 V793.9 H267.1 Z M277.1 667.9 V785.9 H443.1 V667.9 Z" fill="rgba(107,107,107,0.8)" fill-rule="evenodd"/>
<rect x="277.1" y="667.9" width="166" height="118" fill="#1a1a1a" />
<circle cx="357.8" cy="727.9" r="43.4" fill="url(#sp2)"/>
<circle cx="364.74" cy="719.22" r="4.99" fill="url(#sh2)"/>
<circle cx="326.55" cy="731.37" r="4.34" fill="url(#sh2)" opacity="0.35"/>
<path d="M451.1 657.9 H467.1 V721.8 H451.1 Z M453.1 659.9 V719.8 H465.1 V659.9 Z" fill="rgba(0,0,0,0.42)" fill-rule="evenodd"/>
<path d="M451.1 657.9 H467.1 V721.8 H451.1 Z M453.1 659.9 V719.8 H465.1 V659.9 Z" fill="rgb(152,152,152)" fill-rule="evenodd" class="add"/>
<rect x="453.1" y="659.9" width="12" height="59.9" fill="rgba(173,173,173,0.81)" />
<path d="M451.1 728.9 H467.1 V795.9 H451.1 Z M453.1 730.9 V793.9 H465.1 V730.9 Z" fill="rgba(0,0,0,0.42)" fill-rule="evenodd"/>
<path d="M451.1 728.9 H467.1 V795.9 H451.1 Z M453.1 730.9 V793.9 H465.1 V730.9 Z" fill="rgb(152,152,152)" fill-rule="evenodd" class="add"/>
<rect x="453.1" y="730.9" width="12" height="63" fill="rgba(173,173,173,0.81)" />
<rect x="453.1" y="703.9" width="12" height="16.6" fill="rgba(86,128,182,0.92)" />
<rect x="453.1" y="731.2" width="12" height="18.8" fill="rgba(86,128,182,0.92)" />
<path d="M3 703.8 H142.8 V705.8 H3 Z M3 808 H142.8 V810 H3 Z" fill="rgba(0,0,0,0.42)" fill-rule="evenodd"/>
<path d="M3 703.8 H142.8 V705.8 H3 Z M3 808 H142.8 V810 H3 Z" fill="rgb(152,152,152)" fill-rule="evenodd" class="add"/>
<path d="M3 705.8 H142.8 V808 H3 Z M13.1 714.1 V799.9 H134.9 V714.1 Z" fill="rgba(107,107,107,0.8)" fill-rule="evenodd"/>
<rect x="13.1" y="714.1" width="121.8" height="85.8" fill="#1a1a1a" />
<rect x="0" y="703.7" width="3" height="106.3" fill="#4a98f6" />
<circle cx="72.9" cy="757.8" r="22.2" fill="url(#sp3)"/>
<circle cx="76.45" cy="753.36" r="2.55" fill="url(#sh3)"/>
<circle cx="56.92" cy="759.58" r="2.22" fill="url(#sh3)" opacity="0.35"/>
<path d="M142.8 703.7 H159 V810 H142.8 Z M142.8 705.7 V808 H157 V705.7 Z" fill="rgba(0,0,0,0.42)" fill-rule="evenodd"/>
<path d="M142.8 703.7 H159 V810 H142.8 Z M142.8 705.7 V808 H157 V705.7 Z" fill="rgb(152,152,152)" fill-rule="evenodd" class="add"/>
<rect x="142.8" y="705.7" width="14.2" height="102.3" fill="rgba(173,173,173,0.81)" />
<rect x="145" y="738.9" width="12" height="12" fill="rgba(66,108,170,0.9)" />
<rect x="145" y="760.8" width="12" height="14.2" fill="rgba(66,108,170,0.9)" />
<path d="M-10 812.2 H22.8 V838.6 H-10 Z M-8 814.2 V836.6 H20.8 V814.2 Z" fill="rgba(255,255,255,0.4)" fill-rule="evenodd"/>
<rect x="-8" y="814.2" width="28.8" height="22.4" fill="rgba(48,48,48,0.54)" />
<path d="M25.2 812.2 H159 V838.6 H25.2 Z M27.2 814.2 V836.6 H51.56 V814.2 Z M53.56 814.2 V836.6 H77.92 V814.2 Z M79.92 814.2 V836.6 H104.28 V814.2 Z M106.28 814.2 V836.6 H130.64 V814.2 Z M132.64 814.2 V836.6 H157 V814.2 Z" fill="rgba(255,255,255,0.4)" fill-rule="evenodd"/>
<rect x="27.2" y="814.2" width="24.36" height="22.4" fill="rgba(47,47,47,0.81)" />
<circle cx="37.18" cy="827.5" r="7" fill="#285850"/>
<rect x="53.56" y="814.2" width="24.36" height="22.4" fill="rgba(47,47,47,0.81)" />
<circle cx="63.54" cy="827.5" r="7" fill="#502850"/>
<rect x="79.92" y="814.2" width="24.36" height="22.4" fill="rgba(47,47,47,0.81)" />
<circle cx="89.9" cy="827.5" r="7" fill="#383060"/>
<rect x="106.28" y="814.2" width="24.36" height="22.4" fill="rgba(47,47,47,0.81)" />
<circle cx="116.26" cy="827.5" r="7" fill="#283860"/>
<rect x="132.64" y="814.2" width="24.36" height="22.4" fill="rgba(47,47,47,0.81)" />
<path d="M143.52 818.3 Q145.2 825.02 151.92 826.7 Q145.2 828.38 143.52 835.1 Q141.84 828.38 135.12 826.7 Q141.84 825.02 143.52 818.3 Z" fill="rgba(255,255,255,0.2)"/>
<text x="-27.4" y="832.5" font-family="Liberation Mono" font-size="18.8" fill="rgba(255,255,255,0.78)" text-anchor="start" font-weight="normal" textLength="116.8" lengthAdjust="spacingAndGlyphs" >transform1</text>
<path d="M264 875 H278 V960.2 H264 Z M266 877 V958.2 H278 V877 Z" fill="rgba(250,230,105,0.95)" fill-rule="evenodd"/>
<rect x="266" y="877" width="12" height="81.2" fill="rgba(160,150,82,0.85)" />
<path d="M278 875 H304.1 V960.2 H278 Z M280 877.1 V900.5 H302.1 V877.1 Z M280 903.2 V926.6 H302.1 V903.2 Z M280 927.5 V950.9 H302.1 V927.5 Z M280 953.1 V958.2 H302.1 V953.1 Z" fill="rgba(250,230,105,0.95)" fill-rule="evenodd"/>
<rect x="280" y="877.1" width="22.1" height="23.4" fill="rgba(160,150,82,0.85)" />
<g transform="translate(280.05 877) scale(1)" fill="rgba(255,250,200,0.55)" stroke="none"><circle cx="10" cy="12.5" r="6.3" fill="none" stroke="rgba(255,250,200,0.55)" stroke-width="1.8"/><circle cx="10" cy="12.5" r="3.5"/></g>
<rect x="280" y="903.2" width="22.1" height="23.4" fill="rgba(160,150,82,0.85)" />
<g transform="translate(280.05 903.1) scale(1)" fill="rgba(255,250,200,0.55)" stroke="none"><path d="M17.9 4.4 L11.3 9.9 L9.4 7.4 L2.1 20 L8.9 15 L10.9 17.5 Z"/></g>
<rect x="280" y="927.5" width="22.1" height="23.4" fill="rgba(160,150,82,0.85)" />
<g transform="translate(280.05 927.4) scale(1)" fill="rgba(255,250,200,0.55)" stroke="none"><circle cx="9.2" cy="16.6" r="5"/><path d="M12.4 13.8 V10.2 A2.25 2.6 0 0 1 16.9 10.2 V13" fill="none" stroke="rgba(255,250,200,0.55)" stroke-width="2.2"/></g>
<rect x="280" y="953.1" width="22.1" height="5.1" fill="rgba(160,150,82,0.85)" />
<path d="M304.1 875.1 H443 V877.1 H304.1 Z M304.1 958.2 H443 V960.2 H304.1 Z" fill="rgba(0,0,0,0.42)" fill-rule="evenodd"/>
<path d="M304.1 875.1 H443 V877.1 H304.1 Z M304.1 958.2 H443 V960.2 H304.1 Z" fill="rgb(152,152,152)" fill-rule="evenodd" class="add"/>
<path d="M304.1 877.1 H443 V958.2 H304.1 Z M314.1 885 V949.8 H435 V885 Z" fill="rgba(107,107,107,0.8)" fill-rule="evenodd"/>
<rect x="314.1" y="885" width="120.9" height="64.8" fill="#1a1a1a" />
<path d="M443 875 H459 V912.8 H443 Z M445 877 V910.8 H457 V877 Z" fill="rgba(0,0,0,0.42)" fill-rule="evenodd"/>
<path d="M443 875 H459 V912.8 H443 Z M445 877 V910.8 H457 V877 Z" fill="rgb(152,152,152)" fill-rule="evenodd" class="add"/>
<rect x="445" y="877" width="12" height="33.8" fill="rgba(173,173,173,0.81)" />
<path d="M443 919.2 H459 V960.2 H443 Z M445 921.2 V958.2 H457 V921.2 Z" fill="rgba(0,0,0,0.42)" fill-rule="evenodd"/>
<path d="M443 919.2 H459 V960.2 H443 Z M445 921.2 V958.2 H457 V921.2 Z" fill="rgb(152,152,152)" fill-rule="evenodd" class="add"/>
<rect x="445" y="921.2" width="12" height="37" fill="rgba(173,173,173,0.81)" />
<rect x="445" y="903" width="12" height="7.8" fill="rgba(178,146,70,0.92)" />
<rect x="445" y="921.2" width="12" height="10.7" fill="rgba(178,146,70,0.92)" />
<path d="M264 962.2 H429.9 V988.9 H264 Z M266 964.2 V986.9 H427.9 V964.2 Z" fill="rgba(255,255,255,0.4)" fill-rule="evenodd"/>
<rect x="266" y="964.2" width="161.9" height="22.7" fill="rgba(48,48,48,0.54)" />
<text x="269.3" y="982.5" font-family="Liberation Mono" font-size="18.8" fill="rgba(255,255,255,0.78)" text-anchor="start" font-weight="normal" textLength="71.68" lengthAdjust="spacingAndGlyphs" >phong1</text>
<path d="M431.9 962.2 H459 V988.9 H431.9 Z M433.9 964.2 V986.9 H457 V964.2 Z" fill="rgba(255,255,255,0.4)" fill-rule="evenodd"/>
<rect x="433.9" y="964.2" width="23.1" height="22.7" fill="rgba(47,47,47,0.81)" />
<path d="M444.15 968.45 Q445.83 975.17 452.55 976.85 Q445.83 978.53 444.15 985.25 Q442.47 978.53 435.75 976.85 Q442.47 975.17 444.15 968.45 Z" fill="rgba(255,255,255,0.2)"/>
<g clip-path="url(#torc)">
<ellipse cx="376.6" cy="921.6" rx="44.4" ry="29" fill="url(#tor)"/>
<ellipse cx="376.6" cy="917" rx="30" ry="13" fill="#9a9a9a" opacity="0.35" filter="url(#tblur)"/>
<ellipse cx="375.4" cy="910.6" rx="20.5" ry="6.8" fill="url(#torh)" filter="url(#tblur)"/>
<ellipse cx="373.2" cy="903" rx="1.8" ry="1.1" fill="#fff" filter="url(#tblur2)"/>
<ellipse cx="383.6" cy="932.6" rx="5" ry="1.7" fill="#fff" filter="url(#tblur2)"/>
<ellipse cx="346.6" cy="930.4" rx="2.8" ry="1.3" fill="#f2f2f2" transform="rotate(30 346.6 930.4)" filter="url(#tblur2)"/>
</g>
<path d="M639 665.8 H653 V772.3 H639 Z M641 667.8 V770.3 H653 V667.8 Z" fill="rgba(0,0,0,0.42)" fill-rule="evenodd"/>
<path d="M639 665.8 H653 V772.3 H639 Z M641 667.8 V770.3 H653 V667.8 Z" fill="rgb(152,152,152)" fill-rule="evenodd" class="add"/>
<rect x="641" y="667.8" width="12" height="102.5" fill="rgba(100,95,150,0.8)" />
<path d="M653 665.8 H676.9 V772.3 H653 Z M655.1 668.1 V689.4 H674.8 V668.1 Z M655.1 691.65 V712.95 H674.8 V691.65 Z M655.1 715.2 V736.5 H674.8 V715.2 Z M655.1 738.75 V760.05 H674.8 V738.75 Z M655.1 762.3 V770.2 H674.8 V762.3 Z" fill="rgba(0,0,0,0.42)" fill-rule="evenodd"/>
<path d="M653 665.8 H676.9 V772.3 H653 Z M655.1 668.1 V689.4 H674.8 V668.1 Z M655.1 691.65 V712.95 H674.8 V691.65 Z M655.1 715.2 V736.5 H674.8 V715.2 Z M655.1 738.75 V760.05 H674.8 V738.75 Z M655.1 762.3 V770.2 H674.8 V762.3 Z" fill="rgb(152,152,152)" fill-rule="evenodd" class="add"/>
<rect x="655.1" y="668.1" width="19.7" height="21.3" fill="rgba(100,95,150,0.8)" />
<g transform="translate(655.27 668.37) scale(0.88)" fill="rgba(255,255,255,0.5)" stroke="none"><circle cx="10" cy="12.5" r="6.3" fill="none" stroke="rgba(255,255,255,0.5)" stroke-width="1.8"/><circle cx="10" cy="12.5" r="3.5"/></g>
<rect x="655.1" y="691.65" width="19.7" height="21.3" fill="rgba(100,95,150,0.8)" />
<g transform="translate(655.27 691.92) scale(0.88)" fill="rgba(255,255,255,0.5)" stroke="none"><path d="M17.9 4.4 L11.3 9.9 L9.4 7.4 L2.1 20 L8.9 15 L10.9 17.5 Z"/></g>
<rect x="655.1" y="715.2" width="19.7" height="21.3" fill="rgba(100,95,150,0.8)" />
<g transform="translate(655.27 715.47) scale(0.88)" fill="rgba(255,255,255,0.5)" stroke="none"><path d="M2.9 12.2 H9.7 L6.8 7.8 H11.8 L17.7 13.8 L11.8 19.8 H6.8 L9.7 15.4 H2.9 Q2.2 13.8 2.9 12.2 Z"/></g>
<rect x="655.1" y="738.75" width="19.7" height="21.3" fill="rgba(100,95,150,0.8)" />
<g transform="translate(655.27 739.02) scale(0.88)" fill="rgba(255,255,255,0.5)" stroke="none"><circle cx="9.2" cy="16.6" r="5"/><path d="M12.4 13.8 V10.2 A2.25 2.6 0 0 1 16.9 10.2 V13" fill="none" stroke="rgba(255,255,255,0.5)" stroke-width="2.2"/></g>
<rect x="655.1" y="762.3" width="19.7" height="7.9" fill="rgba(100,95,150,0.8)" />
<path d="M676.9 666.1 H818.1 V668.1 H676.9 Z M676.9 770 H818.1 V772 H676.9 Z" fill="rgba(0,0,0,0.42)" fill-rule="evenodd"/>
<path d="M676.9 666.1 H818.1 V668.1 H676.9 Z M676.9 770 H818.1 V772 H676.9 Z" fill="rgb(152,152,152)" fill-rule="evenodd" class="add"/>
<path d="M676.9 668.1 H818.1 V770 H676.9 Z M687.1 676.1 V761.7 H809.9 V676.1 Z" fill="rgba(107,107,107,0.8)" fill-rule="evenodd"/>
<rect x="687.1" y="676.1" width="122.8" height="85.6" fill="#1a1a1a" />
<rect x="687.1" y="684.6" width="122.8" height="69.6" fill="url(#chk)" />
<circle cx="748.6" cy="719.4" r="17.4" fill="url(#rsp)"/>
<circle cx="748.8" cy="719.5" r="1.3" fill="#fff"/>
<path d="M818.1 665.8 H834.2 V772.3 H818.1 Z M820.1 667.8 V770.3 H832.2 V667.8 Z" fill="rgba(0,0,0,0.42)" fill-rule="evenodd"/>
<path d="M818.1 665.8 H834.2 V772.3 H818.1 Z M820.1 667.8 V770.3 H832.2 V667.8 Z" fill="rgb(152,152,152)" fill-rule="evenodd" class="add"/>
<rect x="820.1" y="667.8" width="12.1" height="102.5" fill="rgba(173,173,173,0.81)" />
<rect x="820.1" y="701.9" width="12.1" height="11" fill="rgba(108,78,130,0.92)" />
<rect x="820.1" y="723.1" width="12.1" height="13.5" fill="rgba(108,78,130,0.92)" />
<rect x="818.1" y="712.9" width="16.1" height="10.2" fill="rgba(255,196,170,0.92)" />
<path d="M639 774.4 H777.9 V800.7 H639 Z M641 776.4 V798.7 H775.9 V776.4 Z" fill="rgba(255,255,255,0.4)" fill-rule="evenodd"/>
<rect x="641" y="776.4" width="134.9" height="22.3" fill="rgba(48,48,48,0.54)" />
<text x="646.1" y="794.7" font-family="Liberation Mono" font-size="18.8" fill="rgba(255,255,255,0.78)" text-anchor="start" font-weight="normal" textLength="82.96" lengthAdjust="spacingAndGlyphs" >render1</text>
<path d="M779.9 774.4 H834.2 V800.7 H779.9 Z M781.9 776.4 V798.7 H806.05 V776.4 Z M808.05 776.4 V798.7 H832.2 V776.4 Z" fill="rgba(255,255,255,0.4)" fill-rule="evenodd"/>
<rect x="781.9" y="776.4" width="24.15" height="22.3" fill="rgba(47,47,47,0.81)" />
<circle cx="791.77" cy="789.65" r="7" fill="rgba(62,70,118,0.8)"/>
<rect x="808.05" y="776.4" width="24.15" height="22.3" fill="rgba(47,47,47,0.81)" />
<path d="M818.83 780.45 Q820.5 787.17 827.23 788.85 Q820.5 790.53 818.83 797.25 Q817.15 790.53 810.43 788.85 Q817.15 787.17 818.83 780.45 Z" fill="rgba(255,255,255,0.2)"/>
<path d="M625.3 840.2 H848.1 V1029.5 H625.3 Z M635.1 850.2 V1019.9 H837.9 V850.2 Z" fill="rgba(0,0,0,0.27)" fill-rule="evenodd"/>
<path d="M625.3 840.2 H848.1 V1029.5 H625.3 Z M635.1 850.2 V1019.9 H837.9 V850.2 Z" fill="rgb(16,48,10)" fill-rule="evenodd" class="add"/>
<rect x="625.9" y="840.8" width="221.6" height="188.1" fill="none" stroke="#84f052" stroke-width="1.2" />
<path d="M638.9 854 H652.9 V902.8 H638.9 Z M640.9 856 V900.8 H652.9 V856 Z" fill="rgba(242,170,250,0.9)" fill-rule="evenodd"/>
<rect x="640.9" y="856" width="12" height="44.8" fill="rgba(100,85,135,0.9)" />
<path d="M638.9 909.2 H652.9 V960.3 H638.9 Z M640.9 911.2 V958.3 H652.9 V911.2 Z" fill="rgba(242,170,250,0.9)" fill-rule="evenodd"/>
<rect x="640.9" y="911.2" width="12" height="47.1" fill="rgba(100,85,135,0.9)" />
<rect x="638.9" y="902.8" width="14" height="6.4" fill="rgba(150,40,10,0.35)" />
<path d="M652.9 854 H677.1 V960.3 H652.9 Z M655 856.3 V877.6 H675 V856.3 Z M655 879.85 V901.15 H675 V879.85 Z M655 903.4 V924.7 H675 V903.4 Z M655 926.95 V948.25 H675 V926.95 Z M655 950.5 V958.2 H675 V950.5 Z" fill="rgba(242,170,250,0.9)" fill-rule="evenodd"/>
<rect x="655" y="856.3" width="20" height="21.3" fill="rgba(100,85,135,0.9)" />
<g transform="translate(655.32 856.57) scale(0.88)" fill="rgba(255,255,255,0.5)" stroke="none"><circle cx="10" cy="12.5" r="6.3" fill="none" stroke="rgba(255,255,255,0.5)" stroke-width="1.8"/><circle cx="10" cy="12.5" r="3.5"/></g>
<rect x="655" y="879.85" width="20" height="21.3" fill="rgba(100,85,135,0.9)" />
<g transform="translate(655.32 880.12) scale(0.88)" fill="rgba(255,255,255,0.5)" stroke="none"><path d="M17.9 4.4 L11.3 9.9 L9.4 7.4 L2.1 20 L8.9 15 L10.9 17.5 Z"/></g>
<rect x="655" y="903.4" width="20" height="21.3" fill="rgba(100,85,135,0.9)" />
<g transform="translate(655.32 903.67) scale(0.88)" fill="rgba(255,255,255,0.5)" stroke="none"><path d="M2.9 12.2 H9.7 L6.8 7.8 H11.8 L17.7 13.8 L11.8 19.8 H6.8 L9.7 15.4 H2.9 Q2.2 13.8 2.9 12.2 Z"/></g>
<rect x="655" y="926.95" width="20" height="21.3" fill="rgba(100,85,135,0.9)" />
<g transform="translate(655.32 927.22) scale(0.88)" fill="rgba(255,255,255,0.5)" stroke="none"><circle cx="9.2" cy="16.6" r="5"/><path d="M12.4 13.8 V10.2 A2.25 2.6 0 0 1 16.9 10.2 V13" fill="none" stroke="rgba(255,255,255,0.5)" stroke-width="2.2"/></g>
<rect x="655" y="950.5" width="20" height="7.7" fill="rgba(100,85,135,0.9)" />
<path d="M677.1 854.3 H818.1 V856.3 H677.1 Z M677.1 958 H818.1 V960 H677.1 Z" fill="rgba(0,0,0,0.42)" fill-rule="evenodd"/>
<path d="M677.1 854.3 H818.1 V856.3 H677.1 Z M677.1 958 H818.1 V960 H677.1 Z" fill="rgb(152,152,152)" fill-rule="evenodd" class="add"/>
<path d="M677.1 856.3 H818.1 V958 H677.1 Z M687.1 864.2 V950.1 H809.9 V864.2 Z" fill="rgba(107,107,107,0.8)" fill-rule="evenodd"/>
<rect x="687.1" y="864.2" width="122.8" height="85.9" fill="#1a1a1a" />
<rect x="706.1" y="864.2" width="85.4" height="85.9" fill="url(#ramp2)" />
<path d="M818.1 854 H834.1 V960.3 H818.1 Z M820.1 856 V958.3 H832.1 V856 Z" fill="rgba(0,0,0,0.42)" fill-rule="evenodd"/>
<path d="M818.1 854 H834.1 V960.3 H818.1 Z M820.1 856 V958.3 H832.1 V856 Z" fill="rgb(152,152,152)" fill-rule="evenodd" class="add"/>
<rect x="820.1" y="856" width="12" height="102.3" fill="rgba(173,173,173,0.81)" />
<rect x="820" y="889.3" width="12.1" height="11.7" fill="rgba(80,70,122,0.95)" />
<rect x="820" y="911" width="12.1" height="14" fill="rgba(80,70,122,0.95)" />
<path d="M638.9 962.4 H778 V988.7 H638.9 Z M640.9 964.4 V986.7 H776 V964.4 Z" fill="rgba(255,255,255,0.4)" fill-rule="evenodd"/>
<rect x="640.9" y="964.4" width="135.1" height="22.3" fill="rgba(48,48,48,0.54)" />
<text x="646" y="982.7" font-family="Liberation Mono" font-size="18.8" fill="rgba(255,255,255,0.78)" text-anchor="start" font-weight="normal" textLength="60.4" lengthAdjust="spacingAndGlyphs" >ramp1</text>
<path d="M780.1 962.4 H834.1 V988.7 H780.1 Z M782.1 964.4 V986.7 H806.1 V964.4 Z M808.1 964.4 V986.7 H832.1 V964.4 Z" fill="rgba(255,255,255,0.4)" fill-rule="evenodd"/>
<rect x="782.1" y="964.4" width="24" height="22.3" fill="rgba(47,47,47,0.81)" />
<circle cx="791.9" cy="977.65" r="7" fill="#2c3a62"/>
<rect x="808.1" y="964.4" width="24" height="22.3" fill="rgba(47,47,47,0.81)" />
<path d="M818.8 968.45 Q820.48 975.17 827.2 976.85 Q820.48 978.53 818.8 985.25 Q817.12 978.53 810.4 976.85 Q817.12 975.17 818.8 968.45 Z" fill="rgba(255,255,255,0.2)"/>
<rect x="805.6" y="992.8" width="25.9" height="25.6" fill="none" stroke="#e496c8" stroke-width="1.2" />
<rect x="806.2" y="993.4" width="24.7" height="24.4" fill="#80577a" />
<path d="M816 999.6 Q818 998.8 820 999.6 V1005.2 H824.4 L818 1012.6 L811.6 1005.2 H816 Z" fill="#dccfda" stroke="#dccfda" stroke-width="0.8" stroke-linejoin="round"/>
<rect x="899.2" y="708.3" width="168.7" height="95.5" fill="none" stroke="#404040" stroke-width="2" />
<rect x="900.2" y="709.3" width="166.7" height="93.5" fill="#000000" />
<rect x="901.9" y="711.1" width="28.2" height="60.9" fill="#7868b8" />
<rect x="904" y="713" width="11.9" height="14.8" fill="#584878" />
<rect x="904" y="738.1" width="11.9" height="5.8" fill="#584878" />
<rect x="904" y="753.9" width="11.9" height="16.1" fill="#584878" />
<rect x="918" y="713" width="10.1" height="11.9" fill="#584878" />
<g transform="translate(917.99 713.22) scale(0.46)" fill="rgba(255,255,255,0.55)" stroke="none"><circle cx="10" cy="12.5" r="6.3" fill="none" stroke="rgba(255,255,255,0.55)" stroke-width="1.8"/><circle cx="10" cy="12.5" r="3.5"/></g>
<rect x="918" y="727.1" width="10.1" height="9.5" fill="#584878" />
<g transform="translate(917.99 726.12) scale(0.46)" fill="rgba(255,255,255,0.55)" stroke="none"><path d="M17.9 4.4 L11.3 9.9 L9.4 7.4 L2.1 20 L8.9 15 L10.9 17.5 Z"/></g>
<rect x="918" y="739" width="10.1" height="12" fill="#584878" />
<g transform="translate(917.99 739.27) scale(0.46)" fill="rgba(255,255,255,0.55)" stroke="none"><path d="M2.9 12.2 H9.7 L6.8 7.8 H11.8 L17.7 13.8 L11.8 19.8 H6.8 L9.7 15.4 H2.9 Q2.2 13.8 2.9 12.2 Z"/></g>
<rect x="918" y="753.1" width="10.1" height="11.8" fill="#584878" />
<g transform="translate(917.99 753.27) scale(0.46)" fill="rgba(255,255,255,0.55)" stroke="none"><circle cx="9.2" cy="16.6" r="5"/><path d="M12.4 13.8 V10.2 A2.25 2.6 0 0 1 16.9 10.2 V13" fill="none" stroke="rgba(255,255,255,0.55)" stroke-width="2.2"/></g>
<rect x="918" y="766.9" width="10.1" height="3.1" fill="#584878" />
<rect x="930.1" y="711.1" width="135.1" height="60.9" fill="#8e8e8e" />
<rect x="930.1" y="713" width="118.9" height="57" fill="#5c5c5c" />
<rect x="939.9" y="720.9" width="101.1" height="41.1" fill="#1a1a1a" />
<rect x="953.7" y="720.9" width="73.5" height="41.1" fill="#000" />
<circle cx="990.3" cy="741.8" r="10.4" fill="#dc5a32"/>
<circle cx="990.3" cy="741.8" r="7.5" fill="url(#lk)"/>
<rect x="1051" y="732" width="12.1" height="4.1" fill="#584878" />
<rect x="1051" y="746.1" width="12.1" height="5.9" fill="#584878" />
<rect x="902.9" y="775.1" width="105.1" height="24.8" fill="none" stroke="#666666" stroke-width="2" />
<rect x="903.9" y="776.1" width="103.1" height="22.8" fill="#1a1a1a" />
<text x="907.5" y="795.4" font-family="Liberation Mono" font-size="18.8" fill="#d0d0d0" text-anchor="start" font-weight="normal" textLength="82.96" lengthAdjust="spacingAndGlyphs" >lookup1</text>
<path d="M1011.1 774.1 H1065.2 V800.9 H1011.1 Z M1013.1 776.1 V798.9 H1037.15 V776.1 Z M1039.15 776.1 V798.9 H1063.2 V776.1 Z" fill="#666666" fill-rule="evenodd"/>
<rect x="1013.1" y="776.1" width="24.05" height="22.8" fill="#262626" />
<circle cx="1022.92" cy="789.6" r="7" fill="#2a3a62"/>
<rect x="1039.15" y="776.1" width="24.05" height="22.8" fill="#262626" />
<path d="M1049.88 780.4 Q1051.56 787.12 1058.28 788.8 Q1051.56 790.48 1049.88 797.2 Q1048.2 790.48 1041.48 788.8 Q1048.2 787.12 1049.88 780.4 Z" fill="rgba(255,255,255,0.2)"/>
<path d="M515.4 261 L540.8 314.6" fill="none" stroke="#8c9aac" stroke-width="1" stroke-dasharray="1.6 1.2"/>
<path d="M540.8 314.6 L551.2 336.6" fill="none" stroke="#5c8098" stroke-width="1" stroke-dasharray="2 0.8"/>
<path d="M551.2 336.6 L707.8 668" fill="none" stroke="#3e4a62" stroke-width="0.95" />
<path d="M707.8 668 L709.4 676.4" fill="none" stroke="rgba(110,80,150,0.55)" stroke-width="0.95" />
<path d="M600.2 464.3 L617.7 456.3 L616.7 476.6 Z" fill="#4a5264"/>
<path d="M506.3 524 L665.8 668.3" fill="none" stroke="#3e4a62" stroke-width="0.95" />
<path d="M665.8 668.3 L687.4 688.8" fill="none" stroke="rgba(110,80,150,0.55)" stroke-width="0.95" />
<path d="M579.9 602.8 L592.9 590.2 L600.2 609.5 Z" fill="#4a5264"/>
<path d="M466.5 739.3 L638 736" fill="none" stroke="#3e4a62" stroke-width="0.95" />
<path d="M638 736 L687.2 735.2" fill="none" stroke="rgba(120,80,160,0.6)" stroke-width="0.95" />
<path d="M526 729.1 L526 748 L544.8 737.7 Z" fill="#4a5264"/>
<path d="M559.3 728 L560.3 746.9 L578.3 736.6 Z" fill="#4a5264"/>
<path d="M349.4 788 L350.6 812 L353.4 848 L355.2 868 L356.5 885" fill="none" stroke="#3e4a62" stroke-width="0.95" />
<path d="M353 830.9 L344.2 849.7 L363.8 848.8 Z" fill="#4a5264"/>
<path d="M158.4 757.4 C186 756 196 729 228 728.4" fill="none" stroke="#4a82cc" stroke-width="1" />
<path d="M834.4 720.4 C860 720.6 872 735.4 900 735.6" fill="none" stroke="#6e5eaa" stroke-width="1" />
<path d="M834.4 907.4 C866 905 868 754 900 750.6" fill="none" stroke="#6e5eaa" stroke-width="1" />
<path d="M1065.4 742.6 C1076 742.8 1080 745.4 1088 746.4" fill="none" stroke="#6e5eaa" stroke-width="1" />
<rect x="1088" y="10" width="822" height="972" fill="#404040" />
<rect x="1088" y="10" width="822" height="96" fill="#524870" />
<rect x="1178" y="18" width="732" height="40" fill="#6b628a" />
<text x="1096.4" y="46.2" font-family="Liberation Sans" font-size="21.4" fill="#e9e9e9" text-anchor="start" font-weight="bold" textLength="68.86" lengthAdjust="spacingAndGlyphs" >Ramp</text>
<text x="1185.2" y="47.7" font-family="Liberation Mono" font-size="25" fill="#e6e6e6" text-anchor="start" font-weight="normal" textLength="75.25" lengthAdjust="spacingAndGlyphs" >ramp1</text>
<text x="1098.4" y="96.4" font-family="Liberation Sans" font-size="38.5" fill="#8a84a2" text-anchor="start" font-weight="bold" textLength="21.5" lengthAdjust="spacingAndGlyphs" >?</text>
<text x="1097.4" y="95.4" font-family="Liberation Sans" font-size="38.5" fill="#e4e2ec" text-anchor="start" font-weight="bold" textLength="21.5" lengthAdjust="spacingAndGlyphs" >?</text>
<g clip-path="url(#phc)">
<rect x="1133.8" y="64" width="36.4" height="36.3" fill="#4272a8" />
<path d="M1133.8 101 V90 Q1134.5 84.5 1141 84 L1163 83.2 Q1170.2 83 1170.2 78 V101 Z" fill="#f7d265"/>
</g>
<text x="1141.2" y="96.6" font-family="Liberation Sans" font-size="39" fill="#4a3f63" text-anchor="start" font-weight="bold" textLength="21.5" lengthAdjust="spacingAndGlyphs" stroke="#4a3f63" stroke-width="3" stroke-linejoin="round">?</text>
<text x="1141.2" y="96.6" font-family="Liberation Sans" font-size="39" fill="#ffffff" text-anchor="start" font-weight="bold" textLength="21.5" lengthAdjust="spacingAndGlyphs" >?</text>
<rect x="1192.2" y="77.8" width="8.6" height="18.4" fill="#f2f2f6" rx="1.3"/>
<rect x="1192.2" y="67.8" width="8.6" height="6.8" fill="#f2f2f6" rx="1.6"/>
<path d="M1687.4 86.2 L1705.6 68 Q1707 66.8 1708.4 68 L1713.4 73 Q1714.6 74.4 1713.4 75.8 L1697.2 93.4 L1687.6 94.2 Z" fill="#8b84a8"/>
<path d="M1695.6 83.4 L1706.8 72.2" stroke="#a59fbe" stroke-width="1.6" fill="none"/>
<ellipse cx="1743.6" cy="80.4" rx="16.6" ry="9.3" fill="#a29bbb"/>
<path d="M1732 86 Q1733.6 91.6 1727.4 93.4 Q1736.5 94 1740.4 88.6 Z" fill="#a29bbb"/>
<g transform="rotate(24 1787.6 84.7)" fill="none" stroke="#f1f0f5" stroke-width="2" stroke-linejoin="round"><rect x="1776.6" y="73.2" width="21.4" height="22.6"/><path d="M1782.2 73.6 L1784.6 68.6 L1790 68.6 L1792.4 73.6 Z" fill="#f1f0f5"/><path d="M1800.2 76.4 V98 H1779.4" stroke-width="1.5"/></g>
<circle cx="1832.4" cy="82" r="16.8" fill="#ffffff"/>
<g transform="translate(1832.4 82) scale(0.245)"><path d="M-1 -56 C-28 -56 -27 -44 -27 -44 L-27 -32 L0 -32 L0 -28 L-38 -28 C-38 -28 -56 -30 -56 -1 C-56 27 -40 26 -40 26 L-30 26 L-30 12 C-30 12 -31 -4 -14 -4 L13 -4 C13 -4 28 -4 28 -19 L28 -42 C28 -42 31 -56 -1 -56 Z" fill="#3b72a6"/><circle cx="-15.5" cy="-43.5" r="5" fill="#ffffff"/><path d="M1 56 C28 56 27 44 27 44 L27 32 L0 32 L0 28 L38 28 C38 28 56 30 56 1 C56 -27 40 -26 40 -26 L30 -26 L30 -12 C30 -12 31 4 14 4 L-13 4 C-13 4 -28 4 -28 19 L-28 42 C-28 42 -31 56 1 56 Z" fill="#f6cf55"/><circle cx="15.5" cy="43.5" r="5" fill="#ffffff"/></g>
<rect x="1862.4" y="78.8" width="27.4" height="6.4" fill="#ebeaf1" rx="0.8"/>
<rect x="1872.9" y="68.2" width="6.4" height="27.6" fill="#ebeaf1" rx="0.8"/>
<circle cx="1921" cy="82" r="16.6" fill="none" stroke="#dcdae6" stroke-width="3"/>
<text x="1108.1" y="152" font-family="Liberation Sans" font-size="24.4" fill="#b6b6b6" text-anchor="start" font-weight="normal" textLength="68.59" lengthAdjust="spacingAndGlyphs" >Ramp</text>
<text x="1199.9" y="152" font-family="Liberation Sans" font-size="24.4" fill="#b6b6b6" text-anchor="start" font-weight="normal" textLength="82.97" lengthAdjust="spacingAndGlyphs" >Output</text>
<text x="1306.2" y="152" font-family="Liberation Sans" font-size="24.4" fill="#b6b6b6" text-anchor="start" font-weight="normal" textLength="107.79" lengthAdjust="spacingAndGlyphs" >Common</text>
<rect x="1096" y="166.2" width="814" height="1.8" fill="#a9a9a9" />
<rect x="1096" y="162" width="92" height="6" fill="#dedede" />
<text x="1440.1" y="207" font-family="Liberation Sans" font-size="24.4" fill="#b4b4b4" text-anchor="end" font-weight="normal" textLength="50.08" lengthAdjust="spacingAndGlyphs" >DAT</text>
<rect x="1448" y="178.2" width="452.2" height="39.8" fill="#b1b1b1" />
<text x="1454.2" y="207.6" font-family="Liberation Mono" font-size="25" fill="#151515" text-anchor="start" font-weight="normal" textLength="152.9" lengthAdjust="spacingAndGlyphs" >ramp1_keys</text>
<rect x="1901.3" y="180.9" width="10.2" height="5" fill="none" stroke="#2c2c2c" stroke-width="1" />
<rect x="1901.8" y="181.4" width="9.2" height="4" fill="#666666" />
<rect x="1096" y="234" width="40" height="40" fill="#000" />
<rect x="1096" y="234" width="40" height="40" fill="url(#rbw)" />
<rect x="1146" y="224" width="764" height="62" fill="#2a2a2a" />
<rect x="1146" y="224" width="764" height="2" fill="#969696" />
<rect x="1146" y="224" width="2" height="61.4" fill="#969696" />
<rect x="1148" y="226" width="762" height="41" fill="url(#ramp)" />
<rect x="1148" y="269" width="762" height="15" fill="#ffffff" />
<path d="M1148.5 226 V240.5 H1156.5" fill="none" stroke="#f4f4f4" stroke-width="1.3"/>
<rect x="1556.4" y="226.2" width="9.6" height="14.2" fill="none" stroke="#f4f4f4" stroke-width="1.2" />
<rect x="1557" y="226.8" width="8.4" height="13" fill="#000000" />
<rect x="1570.2" y="226.2" width="9.4" height="14.2" fill="none" stroke="#0a0a0a" stroke-width="1.2" />
<rect x="1570.8" y="226.8" width="8.2" height="13" fill="#ffffff" />
<text x="1221.4" y="319.5" font-family="Liberation Sans" font-size="24.4" fill="#b4b4b4" text-anchor="end" font-weight="normal" textLength="48.61" lengthAdjust="spacingAndGlyphs" >Hue</text>
<rect x="1229" y="294" width="127" height="31.7" fill="#b1b1b1" />
<text x="1235.4" y="319.6" font-family="Liberation Sans" font-size="24.4" fill="#161616" text-anchor="start" font-weight="normal" textLength="45.43" lengthAdjust="spacingAndGlyphs" >185</text>
<rect x="1364" y="294" width="546" height="31.7" fill="url(#hue)" />
<text x="1221.4" y="359.5" font-family="Liberation Sans" font-size="24.4" fill="#b4b4b4" text-anchor="end" font-weight="normal" textLength="39.94" lengthAdjust="spacingAndGlyphs" >Sat</text>
<rect x="1229" y="334" width="127" height="31.7" fill="#b1b1b1" />
<text x="1235.4" y="359.6" font-family="Liberation Sans" font-size="24.4" fill="#161616" text-anchor="start" font-weight="normal" textLength="15.14" lengthAdjust="spacingAndGlyphs" >1</text>
<rect x="1364" y="334" width="546" height="31.7" fill="url(#sat)" />
<text x="1221.4" y="399.5" font-family="Liberation Sans" font-size="24.4" fill="#b4b4b4" text-anchor="end" font-weight="normal" textLength="66.48" lengthAdjust="spacingAndGlyphs" >Value</text>
<rect x="1229" y="374" width="127" height="31.7" fill="#b1b1b1" />
<text x="1235.4" y="399.6" font-family="Liberation Sans" font-size="24.4" fill="#161616" text-anchor="start" font-weight="normal" textLength="15.14" lengthAdjust="spacingAndGlyphs" >1</text>
<rect x="1364" y="374" width="546" height="31.7" fill="url(#val)" />
<text x="1221.4" y="439.5" font-family="Liberation Sans" font-size="24.4" fill="#b4b4b4" text-anchor="end" font-weight="normal" textLength="68.81" lengthAdjust="spacingAndGlyphs" >Alpha</text>
<rect x="1229" y="414" width="127" height="31.7" fill="#b1b1b1" />
<text x="1235.4" y="439.6" font-family="Liberation Sans" font-size="24.4" fill="#161616" text-anchor="start" font-weight="normal" textLength="15.14" lengthAdjust="spacingAndGlyphs" >1</text>
<rect x="1364" y="414" width="546" height="31.7" fill="url(#alp)" />
<rect x="1652" y="298.6" width="17.8" height="22.5" fill="none" stroke="#9cc4c8" stroke-width="1.2" />
<rect x="1652.6" y="299.2" width="16.6" height="21.3" fill="#555658" />
<text x="1440.1" y="479" font-family="Liberation Sans" font-size="24.4" fill="#cecece" text-anchor="end" font-weight="normal" textLength="55.71" lengthAdjust="spacingAndGlyphs" >Type</text>
<rect x="1448.2" y="450.8" width="461.8" height="38.6" fill="#333333" />
<rect x="1450.4" y="453" width="459.6" height="34.2" fill="#595959" />
<text x="1458.2" y="479" font-family="Liberation Sans" font-size="24.4" fill="#c6c6c6" text-anchor="start" font-weight="normal" textLength="121.52" lengthAdjust="spacingAndGlyphs" >Horizontal</text>
<text x="1440.1" y="523" font-family="Liberation Sans" font-size="24.4" fill="#727272" text-anchor="end" font-weight="normal" textLength="94.01" lengthAdjust="spacingAndGlyphs" >Position</text>
<text x="1454" y="523" font-family="Liberation Mono" font-size="25" fill="#6c6c6c" text-anchor="start" font-weight="normal" >0</text>
<text x="1702.2" y="523" font-family="Liberation Mono" font-size="25" fill="#6c6c6c" text-anchor="start" font-weight="normal" >0</text>
<text x="1440.1" y="567" font-family="Liberation Sans" font-size="24.4" fill="#e2e2e2" text-anchor="end" font-weight="normal" textLength="72.23" lengthAdjust="spacingAndGlyphs" >Phase</text>
<rect x="1448" y="538.5" width="99.6" height="39.2" fill="#565656" />
<text x="1454" y="567.6" font-family="Liberation Mono" font-size="25" fill="#d4d4d4" text-anchor="start" font-weight="normal" >0</text>
<rect x="1552.4" y="556" width="357.6" height="4" fill="#2f2f2f" />
<rect x="1738.5" y="543.5" width="17" height="29" fill="none" stroke="#3a3a3a" stroke-width="1" />
<rect x="1739" y="544" width="16" height="28" fill="#676767" />
<path d="M1099.5 557.5 H1117.5 M1108.5 548.5 V566.5" stroke="#d2d2d2" stroke-width="1" fill="none"/>
<text x="1440.1" y="611" font-family="Liberation Sans" font-size="24.4" fill="#cecece" text-anchor="end" font-weight="normal" textLength="75.41" lengthAdjust="spacingAndGlyphs" >Period</text>
<rect x="1448" y="582.3" width="99.6" height="39.4" fill="#565656" />
<text x="1454.6" y="611.6" font-family="Liberation Sans" font-size="24.4" fill="#d4d4d4" text-anchor="start" font-weight="normal" textLength="15.14" lengthAdjust="spacingAndGlyphs" >1</text>
<rect x="1552.4" y="600" width="357.6" height="4" fill="#2f2f2f" />
<rect x="1591.5" y="587.5" width="17" height="29" fill="none" stroke="#3a3a3a" stroke-width="1" />
<rect x="1592" y="588" width="16" height="28" fill="#676767" />
<rect x="1276" y="598.4" width="133.6" height="35.2" fill="#6c6c6c" />
<rect x="1277.2" y="599.6" width="131.2" height="32.8" fill="#262626" />
<text x="1287.4" y="624.4" font-family="Liberation Sans" font-size="24.4" fill="#8a8a8a" text-anchor="start" font-weight="normal" textLength="71.82" lengthAdjust="spacingAndGlyphs" >phase</text>
<text x="1375.6" y="624.4" font-family="Liberation Sans" font-size="24.4" fill="#c2c2ea" text-anchor="start" font-weight="normal" textLength="15.14" lengthAdjust="spacingAndGlyphs" >0</text>
<text x="1440.1" y="655" font-family="Liberation Sans" font-size="24.4" fill="#cecece" text-anchor="end" font-weight="normal" textLength="137.32" lengthAdjust="spacingAndGlyphs" >Extend Left</text>
<rect x="1448.2" y="626.8" width="461.8" height="38.6" fill="#333333" />
<rect x="1450.4" y="629" width="459.6" height="34.2" fill="#595959" />
<text x="1458.2" y="655" font-family="Liberation Sans" font-size="24.4" fill="#c6c6c6" text-anchor="start" font-weight="normal" textLength="83.78" lengthAdjust="spacingAndGlyphs" >Repeat</text>
<text x="1440.1" y="699" font-family="Liberation Sans" font-size="24.4" fill="#cecece" text-anchor="end" font-weight="normal" textLength="155.36" lengthAdjust="spacingAndGlyphs" >Extend Right</text>
<rect x="1448.2" y="670.8" width="461.8" height="38.6" fill="#333333" />
<rect x="1450.4" y="673" width="459.6" height="34.2" fill="#595959" />
<text x="1458.2" y="699" font-family="Liberation Sans" font-size="24.4" fill="#c6c6c6" text-anchor="start" font-weight="normal" textLength="154.41" lengthAdjust="spacingAndGlyphs" >Same as Left</text>
<text x="1440.1" y="743" font-family="Liberation Sans" font-size="24.4" fill="#cecece" text-anchor="end" font-weight="normal" textLength="237.66" lengthAdjust="spacingAndGlyphs" >Interpolate Notches</text>
<rect x="1448.2" y="714.8" width="461.8" height="38.6" fill="#333333" />
<rect x="1450.4" y="717" width="459.6" height="34.2" fill="#595959" />
<text x="1458.2" y="743" font-family="Liberation Sans" font-size="24.4" fill="#c6c6c6" text-anchor="start" font-weight="normal" textLength="73.97" lengthAdjust="spacingAndGlyphs" >Linear</text>
<text x="1440.1" y="787" font-family="Liberation Sans" font-size="24.4" fill="#727272" text-anchor="end" font-weight="normal" textLength="168.59" lengthAdjust="spacingAndGlyphs" >Curve Tension</text>
<text x="1454" y="787" font-family="Liberation Mono" font-size="25" fill="#6c6c6c" text-anchor="start" font-weight="normal" >0</text>
<rect x="1552.4" y="776.4" width="357.6" height="3.2" fill="#373737" />
<rect x="1739.1" y="764" width="16" height="28" fill="none" stroke="#3b3b3b" stroke-width="1" />
<rect x="1739.6" y="764.5" width="15" height="27" fill="#464646" />
<text x="1440.1" y="831" font-family="Liberation Sans" font-size="24.4" fill="#727272" text-anchor="end" font-weight="normal" textLength="113.35" lengthAdjust="spacingAndGlyphs" >Anti-Alias</text>
<text x="1454.6" y="831" font-family="Liberation Sans" font-size="24.4" fill="#6c6c6c" text-anchor="start" font-weight="normal" textLength="15.14" lengthAdjust="spacingAndGlyphs" >4</text>
<rect x="1552.4" y="820.4" width="357.6" height="3.2" fill="#373737" />
<text x="1440.1" y="875" font-family="Liberation Sans" font-size="24.4" fill="#727272" text-anchor="end" font-weight="normal" textLength="117.84" lengthAdjust="spacingAndGlyphs" >Fit Aspect</text>
<rect x="1448.3" y="846.6" width="461.7" height="38.6" fill="#6c6c6c" />
<rect x="1449.6" y="847.9" width="460.4" height="36" fill="#585858" />
<text x="1458.2" y="874.8" font-family="Liberation Sans" font-size="24.4" fill="#6c6c6c" text-anchor="start" font-weight="normal" textLength="156.98" lengthAdjust="spacingAndGlyphs" >Fit Horizontal</text>
<text x="1440.1" y="919" font-family="Liberation Sans" font-size="24.4" fill="#cecece" text-anchor="end" font-weight="normal" textLength="74.97" lengthAdjust="spacingAndGlyphs" >Dither</text>
<rect x="1448.6" y="890.4" width="98.8" height="38.8" fill="#333333" />
<rect x="1450.8" y="892.6" width="49" height="34.4" fill="#303030" />
<rect x="1499.8" y="892.6" width="45.4" height="34.4" fill="#52525a" />
<text x="1456.4" y="919" font-family="Liberation Sans" font-size="24.4" fill="#d2d2d2" text-anchor="start" font-weight="normal" textLength="35.13" lengthAdjust="spacingAndGlyphs" >Off</text>
<text x="1440.1" y="963" font-family="Liberation Sans" font-size="24.4" fill="#cecece" text-anchor="end" font-weight="normal" textLength="314.36" lengthAdjust="spacingAndGlyphs" >Pre-Multiply RGB by Alpha</text>
<rect x="1448.6" y="934.4" width="98.8" height="38.8" fill="#333333" />
<rect x="1450.4" y="936.2" width="47.6" height="35.4" fill="#8d8d8d" />
<rect x="1498" y="936.2" width="47.8" height="35.4" fill="#b5b5b5" />
<text x="1505.6" y="963" font-family="Liberation Sans" font-size="24.4" fill="#151515" text-anchor="start" font-weight="normal" textLength="33.82" lengthAdjust="spacingAndGlyphs" >On</text>
</svg>
</body></html>
